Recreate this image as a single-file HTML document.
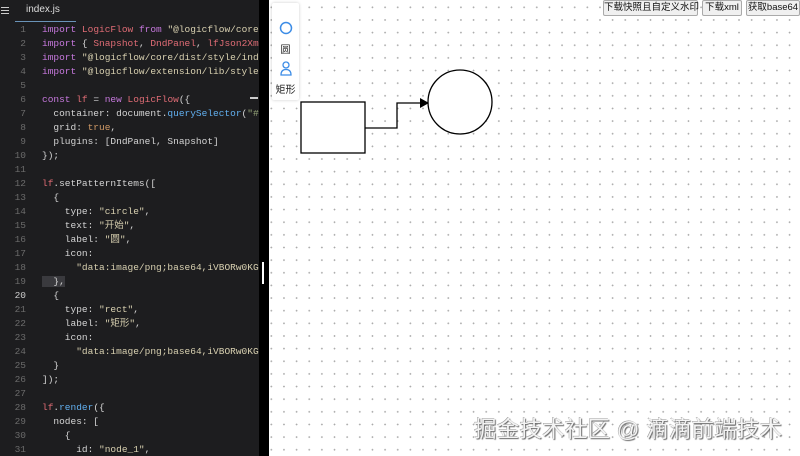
<!DOCTYPE html>
<html><head><meta charset="utf-8"><style>
*{margin:0;padding:0;box-sizing:border-box}
body{width:800px;height:456px;overflow:hidden;position:relative;background:#fff;font-family:"Liberation Sans","Noto Sans CJK SC",sans-serif}
#ed{position:absolute;left:0;top:0;width:259px;height:456px;background:#1d1d1f;overflow:hidden}
#bar{position:absolute;left:259px;top:0;width:10px;height:456px;background:#000}
.tab{position:absolute;left:26px;top:4px;color:#ddd;font-size:10px}
.tabl{position:absolute;left:15px;top:21px;width:61px;height:1px;background:#6a93b8}
.ham{position:absolute;left:1px;top:7px;width:8px}
.ham i{display:block;height:1px;background:#ccc;margin-bottom:2px}
.code{position:absolute;left:0;top:23px;font-family:"Liberation Mono","Noto Sans CJK SC",monospace;font-size:9.5px;line-height:14px;white-space:pre;color:#d4d4d4}
.ln{display:inline-block;width:26px;text-align:right;color:#6b6b6b;margin-right:16px}
.k{color:#c678dd}.c{color:#e06c75}.s{color:#d8d0b0}.f{color:#61afef}.o{color:#d19a66}.g{color:#98a87a}
.hl{background:#3a3a3e}
#cv{position:absolute;left:269px;top:0;width:531px;height:456px;background-color:#fff;background-image:radial-gradient(circle,#a8a8a8 0.7px,transparent 1px);background-size:12.65px 12.65px;background-position:-4px 1px}
.panel{position:absolute;left:272px;top:3px;width:27px;height:97px;background:#fff;box-shadow:0 0 3px rgba(0,0,0,.2);border-radius:2px;font-size:10px;color:#222;text-align:center}
.btn{position:absolute;top:0;height:16px;border:1px solid #aaa;border-radius:2px;background:#f0f0f0;font-size:9.5px;line-height:14px;white-space:nowrap;text-align:center;color:#111}
.wm{position:absolute;left:474px;top:412px;font-size:22.5px;white-space:nowrap;color:#f4f4f4;text-shadow:1px 1px 1px #666,-0.5px -0.5px 0 #999;letter-spacing:0.2px}
</style></head><body>
<div id="ed">
<div class="ham"><i></i><i></i><i></i></div>
<div class="tab">index.js</div><div class="tabl"></div>
<div class="code"><span class="ln">1</span><span class="k">import</span> <span class="c">LogicFlow</span> <span class="k">from</span> <span class="s">"@logicflow/core"</span>
<span class="ln">2</span><span class="k">import</span> { <span class="c">Snapshot</span>, <span class="c">DndPanel</span>, <span class="c">lfJson2Xml</span>
<span class="ln">3</span><span class="k">import</span> <span class="s">"@logicflow/core/dist/style/index</span>
<span class="ln">4</span><span class="k">import</span> <span class="s">"@logicflow/extension/lib/style/</span>
<span class="ln">5</span>
<span class="ln">6</span><span class="k">const</span> <span class="c">lf</span> = <span class="k">new</span> <span class="c">LogicFlow</span>({
<span class="ln">7</span>  container: document.<span class="f">querySelector</span>(<span class="g">"#</span>
<span class="ln">8</span>  grid: <span class="o">true</span>,
<span class="ln">9</span>  plugins: [DndPanel, Snapshot]
<span class="ln">10</span>});
<span class="ln">11</span>
<span class="ln">12</span><span class="c">lf</span>.setPatternItems([
<span class="ln">13</span>  {
<span class="ln">14</span>    type: <span class="s">"circle"</span>,
<span class="ln">15</span>    text: <span class="s">"开始"</span>,
<span class="ln">16</span>    label: <span class="s">"圆"</span>,
<span class="ln">17</span>    icon:
<span class="ln">18</span>      <span class="s">"data:image/png;base64,iVBORw0KG</span>
<span class="ln">19</span><span class="hl">  },</span>
<span class="ln" style="color:#ccc">20</span>  {
<span class="ln">21</span>    type: <span class="s">"rect"</span>,
<span class="ln">22</span>    label: <span class="s">"矩形"</span>,
<span class="ln">23</span>    icon:
<span class="ln">24</span>      <span class="s">"data:image/png;base64,iVBORw0KG</span>
<span class="ln">25</span>  }
<span class="ln">26</span>]);
<span class="ln">27</span>
<span class="ln">28</span><span class="c">lf</span>.<span class="f">render</span>({
<span class="ln">29</span>  nodes: [
<span class="ln">30</span>    {
<span class="ln">31</span>      id: <span class="s">"node_1"</span>,</div>
<div style="position:absolute;left:250px;top:97px;width:8px;height:1.5px;background:#ccc"></div>
</div>
<div id="bar"><div style="position:absolute;left:3px;top:262px;width:2px;height:22px;background:#fff"></div></div>
<div id="cv"></div>
<svg style="position:absolute;left:0;top:0" width="800" height="456">
<rect x="301" y="102" width="64" height="51" fill="#fff" stroke="#000" stroke-width="1.3"/>
<polyline points="365,128 397,128 397,103 420,103" fill="none" stroke="#000" stroke-width="1.3"/>
<polygon points="420,98 429,103 420,108" fill="#000"/>
<circle cx="460" cy="102" r="32" fill="#fff" stroke="#000" stroke-width="1.3"/>
</svg>
<div class="panel">
<svg width="27" height="90" style="position:absolute;left:0;top:0">
<circle cx="14" cy="25" r="5.5" fill="none" stroke="#3c8ce6" stroke-width="1.5"/>
<circle cx="14" cy="62" r="3" fill="none" stroke="#3c8ce6" stroke-width="1.3"/>
<path d="M9 72 Q9 66.5 14 66.5 Q19 66.5 19 72 Z" fill="none" stroke="#3c8ce6" stroke-width="1.3"/>
</svg>
<div style="position:absolute;left:0;width:100%;top:38px">圆</div>
<div style="position:absolute;left:-3px;width:33px;top:78px">矩形</div>
</div>
<div class="btn" style="left:603px;width:95px">下载快照且自定义水印</div>
<div class="btn" style="left:702px;width:40px">下载xml</div>
<div class="btn" style="left:746px;width:54px">获取base64</div>
<div class="wm">掘金技术社区 @ 滴滴前端技术</div>
</body></html>
